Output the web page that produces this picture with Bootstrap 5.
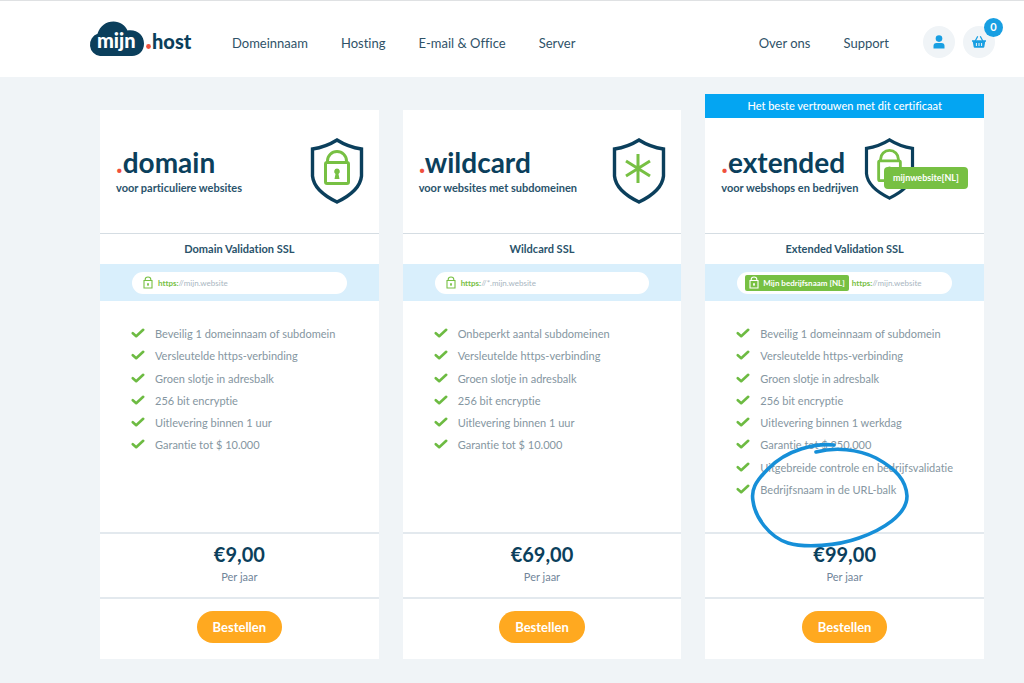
<!DOCTYPE html>
<html lang="nl">
<head>
<meta charset="utf-8">
<meta name="viewport" content="width=device-width, initial-scale=1">
<title>mijn.host – SSL-certificaten</title>
<link href="https://cdn.jsdelivr.net/npm/bootstrap@5.3.0/dist/css/bootstrap.min.css" rel="stylesheet">
<style>
  :root { --navy: #0b3f5c; --green: #77c043; --blue: #04a5f2; --rule: #d5dde3; }
  body { font-family: Lato, "Liberation Sans", sans-serif; font-variant-ligatures: none; background: #f0f4f7; color: var(--navy); }
  .site-bar { min-height: 77px; border-top: 1px solid #dfe1e3; padding: 0 29px 0 88px; }
  .site-bar .navbar-nav { padding-top: 8px; }
  .site-bar .navbar-nav .nav-link { color: #2f5268; font-size: 13px; line-height: 20px; padding: 0; }
  .main-links { gap: 33px; margin-left: 39px; }
  .side-links { gap: 33px; margin-right: 34px; }
  .round-btn { width: 32px; height: 32px; margin-top: 6px; background: #f0f4f7; border: 0; color: #189fe2; padding: 0; }
  .count { top: -8px; right: -8px; width: 19px; height: 19px; font-size: 11px; background: #189fe2; }
  .plans { padding: 33px 40px 24px 100px; }
  .plan { min-height: 549px; }
  .ribbon { top: -16px; height: 24px; background: var(--blue); font-size: 11px; font-weight: 500; }
  .plan-head { height: 124px; padding: 0 16px 4px; border-bottom: 1px solid var(--rule); }
  .plan-name { font-size: 28px; line-height: 36px; font-weight: 700; margin: 0; }
  .plan-name span { color: #f0503c; }
  .plan-sub { font-size: 11px; line-height: 16px; font-weight: 700; margin: 0; color: #2a536b; white-space: nowrap; }
  .shield { top: 28px; right: 15px; }
  .shield-tag { top: 57px; right: 16px; background: var(--green); font-size: 9px; width: 84px; height: 22px; }
  .plan-type { font-size: 11px; line-height: 30px; font-weight: 700; margin: 0; color: #2a536b; }
  .bar-area { background: #d9effc; height: 37px; padding: 0 32px; }
  .address { height: 22px; font-size: 8px; color: #a9b6bf; padding-left: 11px; gap: 5px; }
  .address b, .address svg { color: var(--green); }
  .address .company { background: var(--green); color: #fff; height: 16px; gap: 4px; padding: 0 4px; border-radius: 2px; }
  .address .company svg { color: #fff; }
  .address.with-company { padding-left: 8px; gap: 3px; }
  .perks-area { padding: 22px 0 30px 31px; }
  .perks { display: grid; grid-template-rows: repeat(8, 1fr); height: 178px; margin: 0; font-size: 11px; line-height: 22px; color: #8596a1; white-space: nowrap; }
  .perks svg { color: #6dbb42; margin-right: 10px; vertical-align: baseline; }
  .ring { left: 40px; top: 138px; }
  .price-area { border-top: 2px solid #e3e9ee; border-bottom: 2px solid #e3e9ee; height: 67px; padding-top: 7px; }
  .price { font-size: 20px; line-height: 26px; font-weight: 700; }
  .term { font-size: 11px; line-height: 20px; color: #71869a; }
  .order-area { padding: 12px 0 16px; }
  .order { background: #ffa920; color: #fff; font-size: 13px; line-height: 20px; font-weight: 700; padding: 6px 16px; border: 0; }
  .order:hover { background: #f09a10; color: #fff; }
</style>
</head>
<body>
<svg class="d-none" aria-hidden="true">
  <symbol id="shield" viewBox="0 0 54 66"><path d="M27 2 Q38 9 51.500 11 V38 Q50 53 27 64 Q4 53 2.500 38 V11 Q16 9 27 2Z" fill="none" stroke="#0b3f5c" stroke-width="3.400"/></symbol>
  <symbol id="lock" viewBox="0 0 28 36"><g fill="none" stroke="currentColor" stroke-width="3"><rect x="2.500" y="12.500" width="23" height="21" rx="1.500"/><path d="M4.500 12V11a9.500 9.500 0 0 1 19 0v1"/></g><path d="M14 18.500a3 3 0 0 1 1.500 5.500l1 5h-5l1-5a3 3 0 0 1 1.500-5.500Z" fill="currentColor"/></symbol>
  <symbol id="check" viewBox="0 0 14 10"><path d="M1.800 5.200 5.200 8.200 12.200 1.800" fill="none" stroke="currentColor" stroke-width="2.600" stroke-linecap="round" stroke-linejoin="round"/></symbol>
  <symbol id="smalllock" viewBox="0 0 10 13"><path d="M1 4.500h8v7.500H1zM2.200 4.500V3.500a2.800 2.500 0 0 1 5.600 0v1M5 7v3M4 8.300h2" fill="none" stroke="currentColor" stroke-width="1.100"/></symbol>
</svg>

<header class="site-bar navbar navbar-expand bg-white">
  <a class="navbar-brand p-0 m-0 lh-1" href="#" aria-label="mijn.host">
    <svg width="105" height="36" viewBox="0 0 105 36" font-family="Lato, sans-serif" font-weight="900" font-size="20">
      <path d="M12 35A11.500 11.500 0 0 1 9.500 12.800C12 5 18 .5 25.500 .5C32 .5 37 4 39.500 9.500C49 8 56 14 56 22.500C56 30 51 35 44 35Z" fill="#0b3f5c"/>
      <text x="9" y="27" fill="#fff">mijn</text>
      <circle cx="60.500" cy="25.500" r="2.400" fill="#f0503c"/>
      <text x="64" y="28" fill="#0b3f5c">host</text>
    </svg>
  </a>
  <nav class="navbar-nav main-links">
    <a class="nav-link" href="#">Domeinnaam</a>
    <a class="nav-link" href="#">Hosting</a>
    <a class="nav-link" href="#">E-mail &amp; Office</a>
    <a class="nav-link" href="#">Server</a>
  </nav>
  <nav class="navbar-nav side-links ms-auto">
    <a class="nav-link" href="#">Over ons</a>
    <a class="nav-link" href="#">Support</a>
  </nav>
  <button class="round-btn rounded-circle d-flex align-items-center justify-content-center" type="button" aria-label="Account">
    <svg width="12" height="14" viewBox="0 0 12 14" fill="currentColor"><circle cx="6" cy="3.600" r="3.300"/><path d="M.5 13.500V11Q.5 8 3.500 8h5q3 0 3 3v2.500Z"/></svg>
  </button>
  <button class="round-btn rounded-circle d-flex align-items-center justify-content-center position-relative ms-2" type="button" aria-label="Winkelmand">
    <svg width="14" height="12" viewBox="0 0 14 12"><path d="M3.200 5 5.500 .8M10.800 5 8.500 .8" stroke="currentColor" stroke-width="1.300" stroke-linecap="round"/><path d="M0 4.300h14v1.500h-.8L12.300 11q-.1.800-1 .8H2.700q-.9 0-1-.8L.8 5.800H0Z" fill="currentColor"/><path d="M4.400 7v3M7 7v3M9.600 7v3" stroke="#f0f4f7" stroke-width="1"/></svg>
    <span class="count position-absolute rounded-circle text-white fw-bold d-flex align-items-center justify-content-center">0</span>
  </button>
</header>

<main class="plans">
  <div class="row">
    <div class="col-4">
      <section class="plan card border-0 rounded-0">
        <div class="plan-head d-flex flex-column justify-content-center position-relative">
          <h2 class="plan-name"><span>.</span>domain</h2>
          <p class="plan-sub">voor particuliere websites</p>
          <svg class="shield position-absolute" width="54" height="66"><use href="#shield"/><use href="#lock" x="13" y="12" width="28" height="36" color="#77c043"/></svg>
        </div>
        <h3 class="plan-type text-center">Domain Validation SSL</h3>
        <div class="bar-area d-flex align-items-center">
          <div class="address bg-white rounded-pill flex-fill d-flex align-items-center"><svg width="10" height="13"><use href="#smalllock"/></svg><span><b>https:</b>//mijn.website</span></div>
        </div>
        <div class="perks-area flex-fill">
          <ul class="perks list-unstyled">
            <li><svg width="14" height="10"><use href="#check"/></svg>Beveilig 1 domeinnaam of subdomein</li>
            <li><svg width="14" height="10"><use href="#check"/></svg>Versleutelde https-verbinding</li>
            <li><svg width="14" height="10"><use href="#check"/></svg>Groen slotje in adresbalk</li>
            <li><svg width="14" height="10"><use href="#check"/></svg>256 bit encryptie</li>
            <li><svg width="14" height="10"><use href="#check"/></svg>Uitlevering binnen 1 uur</li>
            <li><svg width="14" height="10"><use href="#check"/></svg>Garantie tot $ 10.000</li>
          </ul>
        </div>
        <div class="price-area text-center"><div class="price">€9,00</div><div class="term">Per jaar</div></div>
        <div class="order-area text-center"><button class="order btn rounded-pill" type="button">Bestellen</button></div>
      </section>
    </div>

    <div class="col-4">
      <section class="plan card border-0 rounded-0">
        <div class="plan-head d-flex flex-column justify-content-center position-relative">
          <h2 class="plan-name"><span>.</span>wildcard</h2>
          <p class="plan-sub">voor websites met subdomeinen</p>
          <svg class="shield position-absolute" width="54" height="66"><use href="#shield"/><path d="M26 16v29M14 23l24 15M38 23 14 38" stroke="#77c043" stroke-width="3"/></svg>
        </div>
        <h3 class="plan-type text-center">Wildcard SSL</h3>
        <div class="bar-area d-flex align-items-center">
          <div class="address bg-white rounded-pill flex-fill d-flex align-items-center"><svg width="10" height="13"><use href="#smalllock"/></svg><span><b>https:</b>//*.mijn.website</span></div>
        </div>
        <div class="perks-area flex-fill">
          <ul class="perks list-unstyled">
            <li><svg width="14" height="10"><use href="#check"/></svg>Onbeperkt aantal subdomeinen</li>
            <li><svg width="14" height="10"><use href="#check"/></svg>Versleutelde https-verbinding</li>
            <li><svg width="14" height="10"><use href="#check"/></svg>Groen slotje in adresbalk</li>
            <li><svg width="14" height="10"><use href="#check"/></svg>256 bit encryptie</li>
            <li><svg width="14" height="10"><use href="#check"/></svg>Uitlevering binnen 1 uur</li>
            <li><svg width="14" height="10"><use href="#check"/></svg>Garantie tot $ 10.000</li>
          </ul>
        </div>
        <div class="price-area text-center"><div class="price">€69,00</div><div class="term">Per jaar</div></div>
        <div class="order-area text-center"><button class="order btn rounded-pill" type="button">Bestellen</button></div>
      </section>
    </div>

    <div class="col-4">
      <section class="plan card border-0 rounded-0">
        <div class="ribbon position-absolute start-0 end-0 text-white d-flex align-items-center justify-content-center">Het beste vertrouwen met dit certificaat</div>
        <div class="plan-head d-flex flex-column justify-content-center position-relative">
          <h2 class="plan-name"><span>.</span>extended</h2>
          <p class="plan-sub">voor webshops en bedrijven</p>
          <svg class="shield position-absolute" width="105" height="62" viewBox="0 0 105 62"><use href="#shield" width="51" height="62"/><use href="#lock" x="12" y="11" width="27" height="34" color="#77c043"/></svg>
          <span class="shield-tag position-absolute rounded-1 text-white fw-bold d-flex align-items-center justify-content-center">mijnwebsite[NL]</span>
        </div>
        <h3 class="plan-type text-center">Extended Validation SSL</h3>
        <div class="bar-area d-flex align-items-center">
          <div class="address with-company bg-white rounded-pill flex-fill d-flex align-items-center"><span class="company d-flex align-items-center fw-bold"><svg width="10" height="13"><use href="#smalllock"/></svg>Mijn bedrijfsnaam [NL]</span><span><b>https:</b>//mijn.website</span></div>
        </div>
        <div class="perks-area flex-fill position-relative">
          <ul class="perks list-unstyled">
            <li><svg width="14" height="10"><use href="#check"/></svg>Beveilig 1 domeinnaam of subdomein</li>
            <li><svg width="14" height="10"><use href="#check"/></svg>Versleutelde https-verbinding</li>
            <li><svg width="14" height="10"><use href="#check"/></svg>Groen slotje in adresbalk</li>
            <li><svg width="14" height="10"><use href="#check"/></svg>256 bit encryptie</li>
            <li><svg width="14" height="10"><use href="#check"/></svg>Uitlevering binnen 1 werkdag</li>
            <li><svg width="14" height="10"><use href="#check"/></svg>Garantie tot $ 250.000</li>
            <li><svg width="14" height="10"><use href="#check"/></svg>Uitgebreide controle en bedrijfsvalidatie</li>
            <li><svg width="14" height="10"><use href="#check"/></svg>Bedrijfsnaam in de URL-balk</li>
          </ul>
          <svg class="ring position-absolute" width="170" height="112" viewBox="0 0 170 112" fill="none" stroke="#168fd8" stroke-width="3.600" stroke-linecap="round" stroke-linejoin="round">
            <path d="M89 6C72 4 42 10 23 30C10 43 6 51 8 62C10 78 24 98 43 104C60 109 92 107 114 99C137 91 162 76 162 57C161 41 151 30 131 19C113 10 90 8 71 13"/>
          </svg>
        </div>
        <div class="price-area text-center"><div class="price">€99,00</div><div class="term">Per jaar</div></div>
        <div class="order-area text-center"><button class="order btn rounded-pill" type="button">Bestellen</button></div>
      </section>
    </div>
  </div>
</main>
<script src="https://cdn.jsdelivr.net/npm/bootstrap@5.3.0/dist/js/bootstrap.bundle.min.js"></script>
</body>
</html>
